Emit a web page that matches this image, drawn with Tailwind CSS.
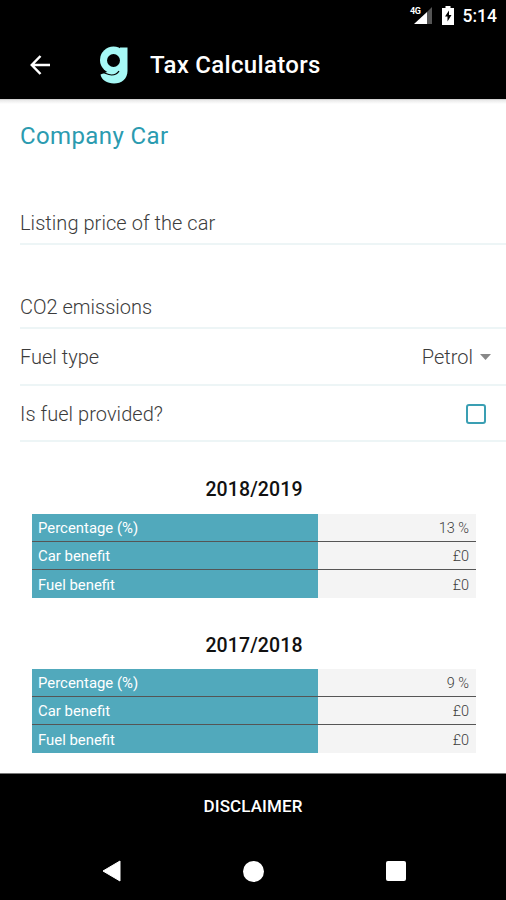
<!DOCTYPE html>
<html lang="en">
  <head>
    <title>Tax Calculators</title>
    <meta charset="UTF-8" />
    <meta name="viewport" content="width=device-width, initial-scale=1.0" />
    <script src="https://cdn.jsdelivr.net/npm/@tailwindcss/browser@4"></script>
  </head>

  <body class="flex h-[900px] w-[506px] flex-col overflow-hidden bg-white font-['Roboto',sans-serif]">
    <!-- Status bar -->
    <div class="flex h-8 shrink-0 items-center justify-end bg-black pr-[9px] text-white">
      <svg class="mr-[10px] h-6 w-6" viewBox="0 0 24 24">
        <path d="M24 3v17h-5V8z" fill="#555" />
        <path d="M19 8v12H6z" fill="#fff" />
        <text x="2" y="10" font-size="9" font-weight="700" fill="#fff" textLength="11">4G</text>
      </svg>
      <svg class="mr-[9px] h-5 w-3" viewBox="0 0 12 20">
        <path d="M3.500 0h5v2H12v17H0V2h3.500z" fill="#fff" />
        <path d="M7 4.500L3 10.500h2.500V15.500L9.500 9H7z" fill="#000" />
      </svg>
      <span class="text-[17.5px] leading-8 font-medium">5:14</span>
    </div>

    <!-- App bar -->
    <header class="flex h-[67px] shrink-0 items-center bg-black pb-0.5 pl-[30px] text-white">
      <svg class="h-5 w-5" viewBox="0 0 20 20" fill="none" stroke="#fff" stroke-width="2.500">
        <path d="M20 10H2M10.500 1L1.800 10l8.700 9" />
      </svg>
      <svg class="ml-[50px] h-[38px] w-7" viewBox="0 0 28 38" fill="#a6f8f5">
        <path d="M20 1.500h7.500V25c0 8-6 12.500-13.500 12.500C7 37.500 1.500 34 .5 28.500L7 26l12-4z" />
        <circle cx="13.500" cy="14" r="13.500" />
        <circle cx="13.500" cy="14.500" r="6.500" fill="#000" />
        <path d="M1 26.500c4-.5 5.500 2.500 10.500 2.500 3.500 0 6-1.500 7.500-4" fill="none" stroke="#000" stroke-width="1.200" />
      </svg>
      <h1 class="ml-[22px] text-2xl font-medium tracking-[0.32px]">Tax Calculators</h1>
    </header>

    <!-- Form -->
    <main class="flex-1 border-t border-[#d4d4d4] bg-linear-to-b from-[#e8e8e8] to-white to-[4px] pl-5 text-[20px] text-[#3c3c3c]">
      <h2 class="flex h-[72px] items-center text-2xl tracking-[0.38px] text-[#2b9bb0]">Company Car</h2>
      <div class="flex h-[73px] items-end border-b-2 border-[#edf5f6] pb-[5px] font-light tracking-[0.05px]">Listing price of the car</div>
      <div class="flex h-[84px] items-end border-b-2 border-[#edf5f6] pb-[5px] font-light">CO2 emissions</div>
      <div class="flex h-[57px] items-center justify-between border-b-2 border-[#edf5f6] pr-[15px] font-light">
        <span>Fuel type</span>
        <span class="flex items-center gap-[7px]">
          Petrol
          <svg class="h-1.5 w-[11px]" viewBox="0 0 11 6"><path d="M0 0h11L5.500 6z" fill="#888" /></svg>
        </span>
      </div>
      <div class="flex h-14 items-center justify-between border-b-2 border-[#edf5f6] pt-0.5 pr-5 font-light tracking-[0.05px]">
        <span>Is fuel provided?</span>
        <span class="h-5 w-5 rounded-[3px] border-2 border-[#3a9fb3]"></span>
      </div>

      <!-- 2018/2019 -->
      <h3 class="mt-8 w-[468px] text-center text-[19.5px] leading-8 font-medium tracking-[0.1px] text-[#111]">2018/2019</h3>
      <div class="mt-2 ml-3 w-[444px] text-[14.9px] text-[#3c3c3c]">
        <div class="flex h-7 items-center border-b border-[#555] bg-[#f4f4f4]">
          <span class="flex h-full w-[286px] items-center bg-[#51a9bc] pt-0.5 pl-1.5 text-white">Percentage (%)</span>
          <span class="flex-1 pt-0.5 pr-[7px] text-right text-[14.5px] font-light">13 %</span>
        </div>
        <div class="flex h-7 items-center border-b border-[#555] bg-[#f4f4f4]">
          <span class="flex h-full w-[286px] items-center bg-[#51a9bc] pt-0.5 pl-1.5 text-white">Car benefit</span>
          <span class="flex-1 pt-0.5 pr-[7px] text-right text-[14.5px] font-light">£0</span>
        </div>
        <div class="flex h-7 items-center bg-[#f4f4f4]">
          <span class="flex h-full w-[286px] items-center bg-[#51a9bc] pt-0.5 pl-1.5 text-white">Fuel benefit</span>
          <span class="flex-1 pt-[3px] pr-[7px] text-right text-[14.5px] font-light">£0</span>
        </div>
      </div>

      <!-- 2017/2018 -->
      <h3 class="mt-8 w-[468px] text-center text-[19.5px] leading-8 font-medium tracking-[0.1px] text-[#111]">2017/2018</h3>
      <div class="mt-[7px] ml-3 w-[444px] text-[14.9px] text-[#3c3c3c]">
        <div class="flex h-7 items-center border-b border-[#555] bg-[#f4f4f4]">
          <span class="flex h-full w-[286px] items-center bg-[#51a9bc] pt-0.5 pl-1.5 text-white">Percentage (%)</span>
          <span class="flex-1 pt-0.5 pr-[7px] text-right text-[14.5px] font-light">9 %</span>
        </div>
        <div class="flex h-7 items-center border-b border-[#555] bg-[#f4f4f4]">
          <span class="flex h-full w-[286px] items-center bg-[#51a9bc] pt-0.5 pl-1.5 text-white">Car benefit</span>
          <span class="flex-1 pt-0.5 pr-[7px] text-right text-[14.5px] font-light">£0</span>
        </div>
        <div class="flex h-7 items-center bg-[#f4f4f4]">
          <span class="flex h-full w-[286px] items-center bg-[#51a9bc] pt-0.5 pl-1.5 text-white">Fuel benefit</span>
          <span class="flex-1 pt-[3px] pr-[7px] text-right text-[14.5px] font-light">£0</span>
        </div>
      </div>
    </main>

    <!-- Disclaimer -->
    <button class="flex h-[70px] shrink-0 items-center justify-center border-t border-[#777] bg-black pb-[3px] text-[17px] font-medium tracking-[0.1px] text-white">DISCLAIMER</button>

    <!-- Navigation bar -->
    <nav class="flex h-[57px] flex-none items-center justify-between bg-black pr-[100px] pb-px pl-[102px]">
      <svg class="h-[22px] w-[19px]" viewBox="0 0 19 22"><path d="M18 1v20L1 11z" fill="#fff" stroke="#fff" stroke-linejoin="round" /></svg>
      <span class="h-[21px] w-[21px] rounded-full bg-white"></span>
      <span class="h-5 w-5 rounded-[2px] bg-white"></span>
    </nav>
  </body>
</html>
